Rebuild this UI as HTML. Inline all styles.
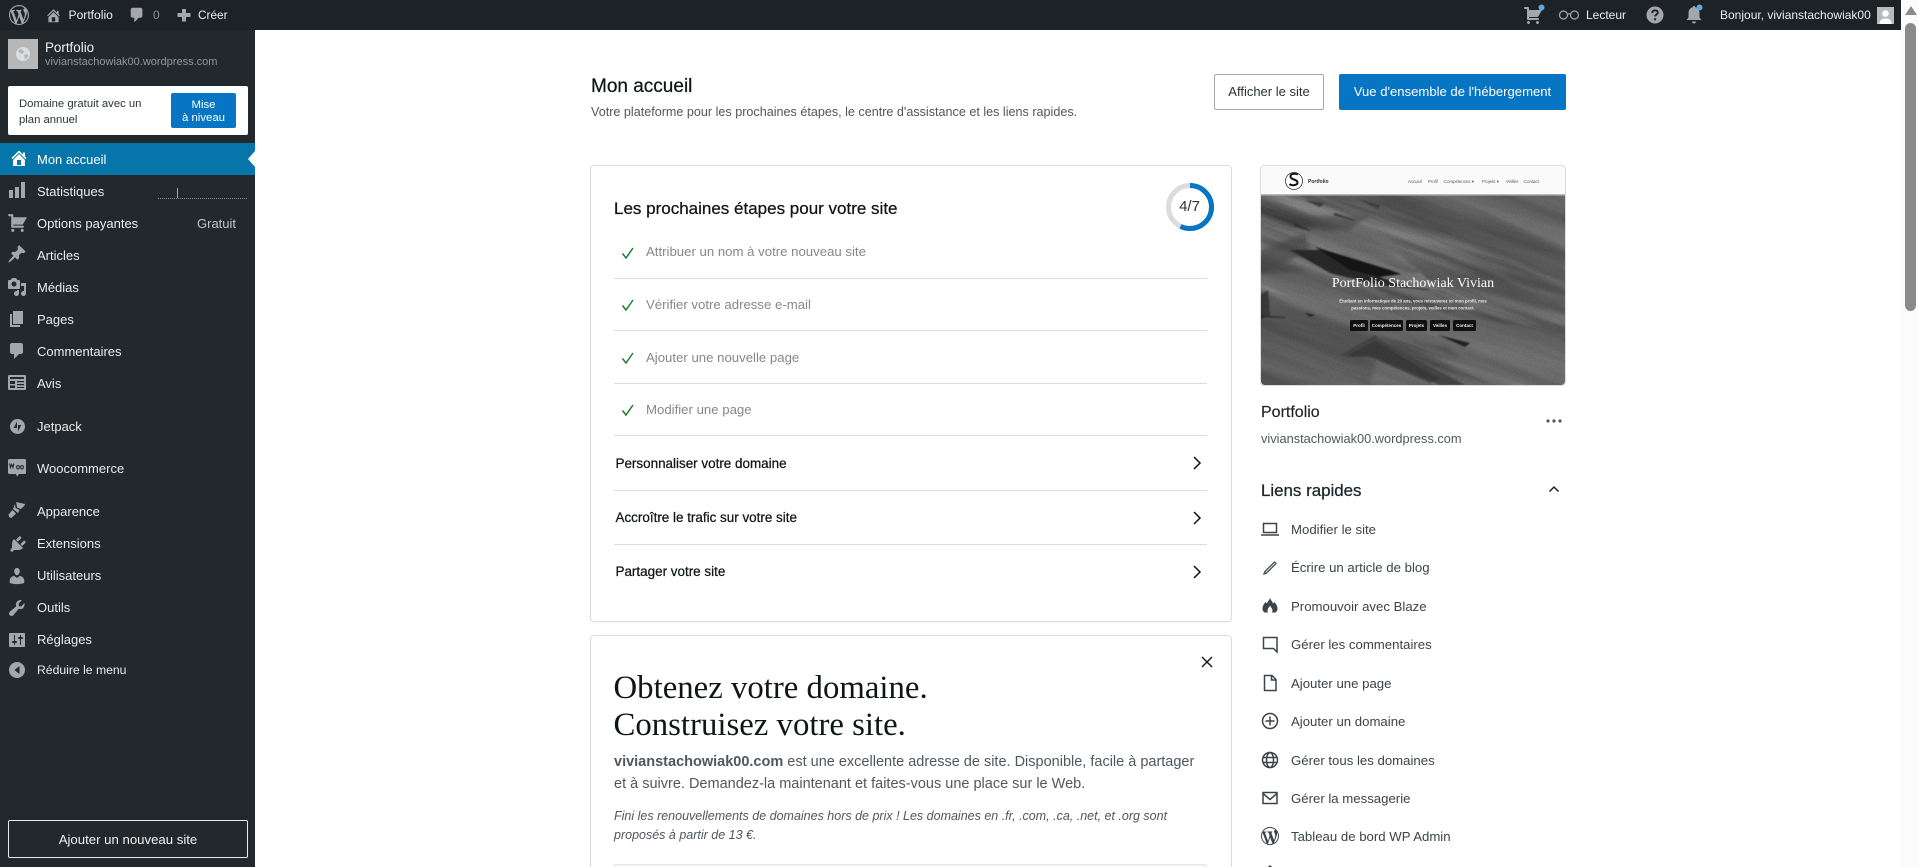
<!DOCTYPE html>
<html lang="fr">
<head>
<meta charset="utf-8">
<title>Mon accueil</title>
<style>
html,body{margin:0;padding:0;width:1918px;height:867px;overflow:hidden;background:#fff}
body{font-family:"Liberation Sans",Arial,sans-serif;position:relative;color:#2c3338}
.t{position:absolute;white-space:nowrap;line-height:20px;height:20px}
.i{position:absolute;display:block}
#bar{position:absolute;left:0;top:0;width:1901px;height:30px;background:#1d2227}
#side{position:absolute;left:0;top:30px;width:255px;height:837px;background:#23282c}
#track{position:absolute;left:1901px;top:0;width:17px;height:867px;background:#fbfbfb}
#thumb{position:absolute;left:1905px;top:23px;width:11px;height:288px;border-radius:6px;background:#8a8a8a}
.bt{color:#eceded;font-size:12.5px}
.m{color:#eaebec;font-size:13px}
.s{fill:#a4a7aa}
.sel{position:absolute;left:0;top:143px;width:255px;height:32px;background:#0675a9}
.card{position:absolute;left:590px;width:640px;background:#fff;border:1px solid #dcdcde;border-radius:4px;box-shadow:0 1px 2px rgba(0,0,0,.04)}
.hr{position:absolute;left:614px;width:593px;height:1px;background:#dcdcde}
.done{color:#84888d;font-size:13.2px}
.row{color:#101517;font-size:13.45px;-webkit-text-stroke:.25px #101517}
.q{color:#3c434a;font-size:13.2px}
.qi{position:absolute;left:1260px;width:20px;height:20px;fill:none;stroke:#3c434a;stroke-width:1.5}
.chk{position:absolute;left:621px;width:14px;height:14px;fill:none;stroke:#1c7d34;stroke-width:1.5}
.chev{position:absolute;left:1191px;width:12px;height:14px;fill:none;stroke:#101517;stroke-width:1.5}
</style>
</head>
<body>
<div id="bar"></div>
<div id="track"></div>
<svg class="i" style="left:1905px;top:6px" width="12" height="9" viewBox="0 0 12 9"><path d="M6 0l6 9H0z" fill="#8a8a8a"/></svg>
<div id="thumb"></div>

<!-- Top bar left -->
<svg class="i" style="left:9px;top:5px" width="20" height="20" viewBox="0 0 20 20"><path fill="#a4a7aa" d="M20 10c0-5.510-4.490-10-10-10C4.480 0 0 4.490 0 10c0 5.520 4.480 10 10 10 5.510 0 10-4.480 10-10zM7.780 15.370L4.370 6.220c.55-.02 1.170-.08 1.170-.08.5-.06.44-1.130-.06-1.110 0 0-1.450.11-2.370.11-.18 0-.37 0-.58-.01C4.120 2.690 6.870 1.110 10 1.110c2.330 0 4.450.87 6.050 2.340-.68-.11-1.650.39-1.650 1.580 0 .74.45 1.360.9 2.100.35.61.55 1.360.55 2.460 0 1.490-1.400 5-1.400 5l-3.030-8.370c.54-.02.82-.17.82-.17.5-.05.44-1.250-.06-1.220 0 0-1.440.12-2.380.12-.87 0-2.330-.12-2.330-.12-.5-.03-.56 1.200-.06 1.220l.92.08 1.260 3.410zM17.410 10c.24-.64.74-1.870.43-4.250.7 1.290 1.050 2.710 1.050 4.250 0 3.290-1.730 6.240-4.480 7.670.99-2.650 1.990-5.020 3-7.670zM6.100 18.090C3.120 16.650 1.110 13.530 1.110 10c0-1.300.23-2.480.72-3.590C3.250 10.300 4.670 14.200 6.100 18.090zm4.030-6.630l2.580 6.980c-.85.290-1.790.45-2.710.45-.790 0-1.550-.11-2.260-.32.79-2.240 1.600-4.470 2.390-7.110z"/></svg>
<svg class="i" style="left:45px;top:7px" width="17" height="17" viewBox="0 0 20 20"><path fill="#a4a7aa" d="M16 8.500l1.530 1.530-1.060 1.060L10 4.620l-6.470 6.470-1.060-1.060L10 2.500l4 4v-2h2v4zm-6-2.460l6 5.990V18H4v-5.970zM12 17v-5H8v5h4z"/></svg>
<div class="t bt" style="left:68.500px;top:5px;font-size:12.100px">Portfolio</div>
<svg class="i" style="left:128px;top:6px" width="18" height="18" viewBox="0 0 20 20"><path fill="#a4a7aa" d="M5 2h9c1.100 0 2 .9 2 2v7c0 1.100-.9 2-2 2h-2l-5 5v-5H5c-1.100 0-2-.9-2-2V4c0-1.100.9-2 2-2z"/></svg>
<div class="t" style="left:153px;top:5px;font-size:12px;color:#8b8f94">0</div>
<svg class="i" style="left:177px;top:8px" width="14" height="14" viewBox="0 0 14 14"><path fill="#a4a7aa" d="M5 1h4v4h4.500v4H9v4.500H5V9H.5V5H5z"/></svg>
<div class="t bt" style="left:198px;top:5px;font-size:11.800px">Créer</div>

<!-- Top bar right -->
<svg class="i" style="left:1523px;top:5px" width="20" height="20" viewBox="0 0 20 20"><path fill="#a4a7aa" d="M6 13h9c.55 0 1 .45 1 1s-.45 1-1 1H5c-.55 0-1-.45-1-1V4H2c-.55 0-1-.45-1-1s.45-1 1-1h3c.55 0 1 .45 1 1v2h13l-4 7H6v1zm-.5 3c.83 0 1.500.67 1.500 1.500S6.330 19 5.500 19 4 18.330 4 17.500 4.670 16 5.500 16zm9 0c.83 0 1.500.67 1.500 1.500s-.67 1.500-1.500 1.500-1.500-.67-1.500-1.500.67-1.500 1.500-1.500z"/></svg>
<svg class="i" style="left:1538px;top:4px" width="7" height="7"><circle cx="3.500" cy="3.500" r="3" fill="#5aa9e6"/></svg>
<svg class="i" style="left:1558px;top:10px" width="22" height="10" viewBox="0 0 22 10"><g fill="none" stroke="#a4a7aa" stroke-width="1.200"><circle cx="5.500" cy="5" r="4"/><circle cx="16.500" cy="5" r="4"/><path d="M9.500 4.500q2-1.500 3 0"/></g></svg>
<div class="t bt" style="left:1586px;top:5px;font-size:12px">Lecteur</div>
<svg class="i" style="left:1646px;top:6px" width="18" height="18" viewBox="0 0 18 18"><circle cx="9" cy="9" r="8.500" fill="#a4a7aa"/><path d="M6.200 7q.2-2.700 2.900-2.700 2.700 0 2.700 2.300c0 1.900-2.700 1.900-2.700 3.800" fill="none" stroke="#1d2227" stroke-width="1.900"/><circle cx="9.100" cy="13.300" r="1.200" fill="#1d2227"/></svg>
<svg class="i" style="left:1685px;top:5px" width="18" height="20" viewBox="0 0 18 20"><path fill="#a4a7aa" d="M9 1c.8 0 1.300.5 1.300 1.200C13 2.900 14.500 5 14.500 8v4.500l2 2.500H1.500l2-2.500V8c0-3 1.500-5.100 4.200-5.800C7.700 1.500 8.200 1 9 1zM7 16.500h4c0 1.200-.9 2-2 2s-2-.8-2-2z"/></svg>
<svg class="i" style="left:1696px;top:4px" width="7" height="7"><circle cx="3.500" cy="3.500" r="3" fill="#5aa9e6"/></svg>
<div class="t bt" style="left:1720px;top:5px;font-size:12px">Bonjour, vivianstachowiak00</div>
<svg class="i" style="left:1877px;top:7px" width="17" height="17" viewBox="0 0 17 17"><rect width="17" height="17" fill="#b9babb"/><circle cx="8.500" cy="6.500" r="3.300" fill="#fff"/><path d="M2.500 17c0-4 2.500-5.500 6-5.500s6 1.500 6 5.500z" fill="#fff"/></svg>

<!-- Sidebar -->
<div id="side"></div>
<svg class="i" style="left:8px;top:39px" width="30" height="30" viewBox="0 0 30 30"><rect width="30" height="30" fill="#b5b7b9"/><circle cx="15" cy="15" r="7" fill="#dcdddf"/><path d="M12 10l3 1 1 2-2 2-2-1-2-2zM16 16l3-1 1.500 2-3 3.500z" fill="#b5b7b9"/></svg>
<div class="t" style="left:45px;top:37.500px;font-size:13.400px;color:#f0f0f1">Portfolio</div>
<div class="t" style="left:45px;top:52px;font-size:11px;color:#93979b">vivianstachowiak00.wordpress.com</div>

<div style="position:absolute;left:8px;top:86px;width:240px;height:49px;background:#fff;border-radius:2px"></div>
<div class="t" style="left:19px;top:93.500px;font-size:11.300px;color:#2c3338">Domaine gratuit avec un</div>
<div class="t" style="left:19px;top:109.500px;font-size:11.300px;color:#2c3338">plan annuel</div>
<div style="position:absolute;left:171px;top:93px;width:65px;height:35px;background:#0675c4;border-radius:2px"></div>
<div class="t" style="left:171px;top:95px;width:65px;text-align:center;font-size:11.400px;color:#fff">Mise</div>
<div class="t" style="left:171px;top:107.500px;width:65px;text-align:center;font-size:11.400px;color:#fff">à niveau</div>

<div class="sel"></div>
<svg class="i" style="left:248px;top:151px" width="7" height="16" viewBox="0 0 7 16"><path d="M7 0v16L0 8z" fill="#fff"/></svg>
<svg class="i" style="left:9px;top:148px" width="20" height="20" viewBox="0 0 20 20"><path fill="#fff" d="M16 8.500l1.530 1.530-1.060 1.060L10 4.620l-6.470 6.470-1.060-1.060L10 2.500l4 4v-2h2v4zm-6-2.460l6 5.990V18H4v-5.970zM12 17v-5H8v5h4z"/></svg>
<div class="t m" style="left:37px;top:150px;color:#fff">Mon accueil</div>

<svg class="i s" style="left:7px;top:180px" width="20" height="20" viewBox="0 0 20 20"><path d="M18 18V2h-4v16h4zm-6 0V7H8v11h4zm-6 0v-8H2v8h4z"/></svg>
<div class="t m" style="left:37px;top:182px">Statistiques</div>
<div style="position:absolute;left:158px;top:198px;width:89px;border-top:1px dotted #8c8f94"></div>
<div style="position:absolute;left:177px;top:188px;width:1px;height:10px;background:#a4a7aa"></div>

<svg class="i s" style="left:7px;top:212px" width="21" height="21" viewBox="0 0 20 20"><path d="M6 13h9c.55 0 1 .45 1 1s-.45 1-1 1H5c-.55 0-1-.45-1-1V4H2c-.55 0-1-.45-1-1s.45-1 1-1h3c.55 0 1 .45 1 1v2h13l-4 7H6v1zm-.5 3c.83 0 1.500.67 1.500 1.500S6.330 19 5.500 19 4 18.330 4 17.500 4.670 16 5.500 16zm9 0c.83 0 1.500.67 1.500 1.500s-.67 1.500-1.500 1.500-1.500-.67-1.500-1.500.67-1.500 1.500-1.500z"/></svg>
<div class="t m" style="left:37px;top:214px">Options payantes</div>
<div class="t m" style="left:197px;top:214px;color:#c3c4c7">Gratuit</div>

<svg class="i s" style="left:7px;top:244px" width="20" height="20" viewBox="0 0 20 20"><path d="M10.440 3.020l1.820-1.820 6.360 6.350-1.830 1.820c-1.050-.68-2.480-.57-3.410.36l-.75.75c-.92.93-1.040 2.350-.35 3.410l-1.830 1.820-2.410-2.410-2.800 2.790c-.42.42-3.380 2.710-3.800 2.290s1.860-3.390 2.280-3.810l2.790-2.790L4.100 9.360l1.830-1.820c1.050.69 2.480.57 3.400-.36l.75-.75c.93-.92 1.050-2.350.36-3.410z"/></svg>
<div class="t m" style="left:37px;top:245.500px">Articles</div>

<svg class="i s" style="left:7px;top:277px" width="20" height="20" viewBox="0 0 20 20"><path d="M13 11V4c0-.55-.45-1-1-1h-1.670L9 1H5L3.670 3H2c-.55 0-1 .45-1 1v7c0 .55.45 1 1 1h10c.55 0 1-.45 1-1zM7 4.500c1.380 0 2.500 1.120 2.500 2.500S8.380 9.500 7 9.500 4.500 8.380 4.500 7 5.620 4.500 7 4.500zM14 6h5v10.500c0 1.380-1.120 2.500-2.500 2.500S14 17.880 14 16.500s1.120-2.500 2.500-2.500c.17 0 .34.02.5.05V9h-3V6zm-4 8.050V13h2v3.500c0 1.380-1.120 2.500-2.500 2.500S7 17.880 7 16.500 8.120 14 9.500 14c.17 0 .34.02.5.05z"/></svg>
<div class="t m" style="left:37px;top:277.500px">Médias</div>

<svg class="i s" style="left:7px;top:309px" width="20" height="20" viewBox="0 0 20 20"><path d="M6 15V2h10v13H6zm-1 1h8v2H3V5h2v11z"/></svg>
<div class="t m" style="left:37px;top:309.500px">Pages</div>

<svg class="i s" style="left:7px;top:341px" width="20" height="20" viewBox="0 0 20 20"><path d="M5 2h9c1.100 0 2 .9 2 2v7c0 1.100-.9 2-2 2h-2l-5 5v-5H5c-1.100 0-2-.9-2-2V4c0-1.100.9-2 2-2z"/></svg>
<div class="t m" style="left:37px;top:341.500px">Commentaires</div>

<svg class="i" style="left:8px;top:375px" width="18" height="15" viewBox="0 0 18 15"><rect width="18" height="15" rx="1" fill="#a4a7aa"/><path d="M2 2h14v2H2zM9 6h7v1.200H9zM9 9h7v1.200H9zM9 12h7v1H9z" fill="#23282c"/><path d="M2 6h5v3H2zM2 10.500h5V13H2z" fill="#23282c"/></svg>
<div class="t m" style="left:37px;top:373.500px">Avis</div>

<svg class="i" style="left:10px;top:419px" width="15" height="15" viewBox="0 0 15 15"><circle cx="7.500" cy="7.500" r="7.500" fill="#a4a7aa"/><path d="M7 2.500v6.500H3.700zM8 12.500V6h3.300z" fill="#23282c"/></svg>
<div class="t m" style="left:37px;top:417px">Jetpack</div>

<svg class="i" style="left:8px;top:459px" width="18" height="18" viewBox="0 0 18 18"><path d="M1.500 0h15A1.500 1.500 0 0 1 18 1.500v12a1.500 1.500 0 0 1-1.500 1.500H11l-2 2.500L8 15H1.500A1.500 1.500 0 0 1 0 13.500v-12A1.500 1.500 0 0 1 1.500 0z" fill="#a4a7aa"/><path d="M2.500 5.500l1 4 1.200-3 1.200 3 1-4M11 7.500a1.400 1.800 0 1 0 .01 0zM15 7.500a1.400 1.800 0 1 0 .01 0z" transform="translate(-1 -1)" fill="none" stroke="#23282c" stroke-width="1.100"/></svg>
<div class="t m" style="left:37px;top:459px">Woocommerce</div>

<svg class="i" style="left:8px;top:501px" width="18" height="18" viewBox="0 0 18 18"><path fill="#a4a7aa" d="M8 1l9 2-.5 1.500-3.500 3.500L9 6.500 8.500 3zM7 3l.5 4L11.500 9 10 12 5 8zM4.500 9l3.500 3.500L3.500 17 1 16 .5 13.500z"/></svg>
<div class="t m" style="left:37px;top:502px">Apparence</div>

<svg class="i s" style="left:8px;top:534px" width="20" height="20" viewBox="0 0 20 20"><path d="M13.110 4.360L9.870 7.600 8 5.730l3.240-3.240c.35-.34 1.050-.2 1.560.32.52.51.66 1.210.31 1.550zm-8 1.770l.91-1.120 9.010 9.010-1.190.84c-.71.71-2.630 1.160-3.820 1.160H6.140L4.900 17.260c-.59.59-1.540.59-2.120 0-.59-.58-.59-1.530 0-2.120l1.240-1.240v-3.880c0-1.130.4-3.050 1.090-3.890zm7.260 3.970l3.240-3.240c.34-.35 1.040-.21 1.550.31.52.51.66 1.210.31 1.550l-3.240 3.250z"/></svg>
<div class="t m" style="left:37px;top:534px">Extensions</div>

<svg class="i s" style="left:7px;top:566px" width="20" height="20" viewBox="0 0 20 20"><path d="M10 9.250c-2.270 0-2.730-3.440-2.730-3.440C7 4.020 7.820 2 9.970 2c2.160 0 2.980 2.020 2.710 3.810 0 0-.41 3.440-2.680 3.440zm0 2.570L12.720 10c2.390 0 4.520 2.330 4.520 4.530v2.490s-3.650 1.130-7.240 1.130c-3.650 0-7.240-1.130-7.240-1.130v-2.490c0-2.250 1.940-4.480 4.470-4.480z"/></svg>
<div class="t m" style="left:37px;top:566px">Utilisateurs</div>

<svg class="i s" style="left:7px;top:598px" width="20" height="20" viewBox="0 0 20 20"><path d="M16.680 9.770c-1.340 1.340-3.300 1.670-4.950.99l-5.410 6.520c-.99.99-2.590.99-3.580 0s-.99-2.590 0-3.570l6.520-5.420c-.68-1.650-.35-3.610.99-4.950 1.280-1.280 3.120-1.640 4.730-1.080L11.530 5.720 11.900 8.100l2.380.37 3.060-3.460c.56 1.610.2 3.450-1.080 4.730z"/></svg>
<div class="t m" style="left:37px;top:598px">Outils</div>

<svg class="i s" style="left:7px;top:630px" width="20" height="20" viewBox="0 0 20 20"><path d="M18 16V4c0-.55-.45-1-1-1H3c-.55 0-1 .45-1 1v12c0 .55.45 1 1 1h14c.55 0 1-.45 1-1zM8 11h1c.55 0 1 .45 1 1s-.45 1-1 1H8v1.500c0 .28-.22.5-.5.5s-.5-.22-.5-.5V13H6c-.55 0-1-.45-1-1s.45-1 1-1h1V5.500c0-.28.22-.5.5-.5s.5.22.5.5V11zm5-2h-1c-.55 0-1-.45-1-1s.45-1 1-1h1V5.500c0-.28.22-.5.5-.5s.5.22.5.5V7h1c.55 0 1 .45 1 1s-.45 1-1 1h-1v5.500c0 .28-.22.5-.5.5s-.5-.22-.5-.5V9z"/></svg>
<div class="t m" style="left:37px;top:630px">Réglages</div>

<svg class="i" style="left:9px;top:662px" width="16" height="16" viewBox="0 0 16 16"><circle cx="8" cy="8" r="8" fill="#a4a7aa"/><path d="M10.500 4v8l-5-4z" fill="#23282c"/></svg>
<div class="t" style="left:37px;top:660px;font-size:12.200px;color:#eaebec">Réduire le menu</div>

<div style="position:absolute;left:8px;top:820px;width:238px;height:36px;border:1px solid #e8e8e8;border-radius:2px"></div>
<div class="t" style="left:8px;top:830px;width:240px;text-align:center;font-size:13.200px;color:#f0f0f1">Ajouter un nouveau site</div>

<!-- Header -->
<div class="t" style="left:591px;top:77px;font-size:19px;color:#101517;-webkit-text-stroke:.25px #101517">Mon accueil</div>
<div class="t" style="left:591px;top:101.500px;font-size:12.600px;color:#50575e">Votre plateforme pour les prochaines étapes, le centre d'assistance et les liens rapides.</div>
<div style="position:absolute;left:1214px;top:74px;width:108px;height:34px;border:1px solid #a7aaad;border-radius:2px;background:#fff"></div>
<div class="t" style="left:1214px;top:82px;width:110px;text-align:center;font-size:13px;color:#2c3338">Afficher le site</div>
<div style="position:absolute;left:1339px;top:74px;width:227px;height:36px;background:#0675c4;border-radius:2px"></div>
<div class="t" style="left:1339px;top:82px;width:227px;text-align:center;font-size:13.100px;color:#fff">Vue d'ensemble de l'hébergement</div>

<!-- Card 1 -->
<div class="card" style="top:165px;height:455px"></div>
<div class="t" style="left:614px;top:199px;font-size:17px;color:#101517;-webkit-text-stroke:.25px #101517">Les prochaines étapes pour votre site</div>
<svg class="i" style="left:1164.500px;top:182px" width="50" height="50" viewBox="0 0 50 50"><circle cx="25" cy="25" r="21.500" fill="none" stroke="#dcdcde" stroke-width="5"/><circle cx="25" cy="25" r="21.500" fill="none" stroke="#0675c4" stroke-width="5" stroke-dasharray="77.200 135.100" transform="rotate(-90 25 25)"/></svg>
<div class="t" style="left:1164.500px;top:197px;width:50px;text-align:center;font-size:15px;color:#2c3338">4/7</div>

<svg class="chk" style="top:246px" viewBox="0 0 14 14"><path d="M1.500 7.500l3.500 4.500L12 2"/></svg>
<div class="t done" style="left:646px;top:242px">Attribuer un nom à votre nouveau site</div>
<div class="hr" style="top:278px"></div>
<svg class="chk" style="top:298px" viewBox="0 0 14 14"><path d="M1.500 7.500l3.500 4.500L12 2"/></svg>
<div class="t done" style="left:646px;top:295px">Vérifier votre adresse e-mail</div>
<div class="hr" style="top:330px"></div>
<svg class="chk" style="top:351px" viewBox="0 0 14 14"><path d="M1.500 7.500l3.500 4.500L12 2"/></svg>
<div class="t done" style="left:646px;top:348px">Ajouter une nouvelle page</div>
<div class="hr" style="top:383px"></div>
<svg class="chk" style="top:403px" viewBox="0 0 14 14"><path d="M1.500 7.500l3.500 4.500L12 2"/></svg>
<div class="t done" style="left:646px;top:400px">Modifier une page</div>
<div class="hr" style="top:435px"></div>
<div class="t row" style="left:615.500px;top:454px">Personnaliser votre domaine</div>
<svg class="chev" style="top:456px" viewBox="0 0 12 14"><path d="M3 1l6 6-6 6"/></svg>
<div class="hr" style="top:490px"></div>
<div class="t row" style="left:615.500px;top:508px">Accroître le trafic sur votre site</div>
<svg class="chev" style="top:511px" viewBox="0 0 12 14"><path d="M3 1l6 6-6 6"/></svg>
<div class="hr" style="top:544px"></div>
<div class="t row" style="left:615.500px;top:562px">Partager votre site</div>
<svg class="chev" style="top:565px" viewBox="0 0 12 14"><path d="M3 1l6 6-6 6"/></svg>

<!-- Card 2 -->
<div class="card" style="top:635px;height:260px"></div>
<svg class="i" style="left:1201px;top:656px" width="12" height="12" viewBox="0 0 12 12"><path d="M1 1l10 10M11 1L1 11" stroke="#101517" stroke-width="1.400"/></svg>
<div class="t" style="left:613.500px;top:671.500px;font-family:'Liberation Serif',serif;font-size:32.800px;line-height:32px;height:32px;color:#101517">Obtenez votre domaine.</div>
<div class="t" style="left:613.500px;top:709px;font-family:'Liberation Serif',serif;font-size:32.800px;line-height:32px;height:32px;color:#101517">Construisez votre site.</div>
<div class="t" style="left:614px;top:752px;font-size:14.500px;color:#50575e"><b>vivianstachowiak00.com</b> est une excellente adresse de site. Disponible, facile à partager</div>
<div class="t" style="left:614px;top:774px;font-size:14.500px;color:#50575e">et à suivre. Demandez-la maintenant et faites-vous une place sur le Web.</div>
<div class="t" style="left:614px;top:806px;font-size:12.500px;font-style:italic;color:#50575e">Fini les renouvellements de domaines hors de prix ! Les domaines en .fr, .com, .ca, .net, et .org sont</div>
<div class="t" style="left:614px;top:825px;font-size:12.500px;font-style:italic;color:#50575e">proposés à partir de 13 €.</div>
<div style="position:absolute;left:614px;top:864px;width:593px;height:30px;background:#f6f7f7;border:1px solid #e4e5e6;box-sizing:border-box;border-radius:2px"></div>

<!-- Preview -->
<div style="position:absolute;left:1260px;top:165px;width:306px;height:221px;border:1px solid #dcdcde;box-sizing:border-box;border-radius:4px;overflow:hidden;background:#fafafa"></div>
<svg class="i" style="left:1260px;top:165px" width="306" height="221" viewBox="0 0 306 221">
<defs>
<clipPath id="c"><path d="M1 30h304v186a4 4 0 0 1-4 4H5a4 4 0 0 1-4-4z"/></clipPath>
<filter id="b1"><feGaussianBlur stdDeviation="2"/></filter>
<filter id="b2"><feGaussianBlur stdDeviation=".8"/></filter>
<filter id="sand" x="0" y="0" width="100%" height="100%" color-interpolation-filters="sRGB"><feTurbulence type="fractalNoise" baseFrequency=".005 .055" numOctaves="4" seed="11"/><feColorMatrix values=".45 0 0 0 .165  .45 0 0 0 .165  .45 0 0 0 .165  0 0 0 0 1"/></filter>
<filter id="n" x="0" y="0" width="100%" height="100%"><feTurbulence type="fractalNoise" baseFrequency=".9" numOctaves="2" seed="4"/><feColorMatrix values="0 0 0 0 0 0 0 0 0 0 0 0 0 0 0 0 0 0 .9 -.3"/></filter>
</defs>
<g clip-path="url(#c)">
<rect x="-80" y="-120" width="480" height="460" transform="rotate(20 153 125)" filter="url(#sand)"/>
<g filter="url(#b1)" opacity=".65">
<path d="M90 30H306V85L200 50z" fill="#6e6e6e"/>
<path d="M130 30L306 105v-20L190 30z" fill="#5a5a5a"/>
<path d="M150 30L306 95v20L110 30z" fill="#555"/>
<path d="M0 110L50 105 120 135 306 170v30L110 170 30 140z" fill="#6e6e6e"/>
<path d="M0 130L100 165 220 221H0z" fill="#5c5c5c"/>
<path d="M140 90L306 135v15L170 115z" fill="#4f4f4f"/>
<path d="M30 65L110 60 150 90 70 80z" fill="#757575"/>
<path d="M0 85L45 68 50 85 12 105 0 110z" fill="#4a4a4a"/>
<path d="M50 52L110 50 90 65 60 65z" fill="#505050"/>
<path d="M150 145L306 190v31H230z" fill="#6e6e6e"/>
<path d="M120 180L200 221H110z" fill="#747474"/>
<path d="M0 150L60 160 110 195 30 221H0z" fill="#5a5a5a"/>
</g>
<g filter="url(#b2)">
<path d="M30 85L60 85 100 102 160 115 170 125 120 120 70 108z" fill="#2b2b2b"/>
<path d="M55 82L130 105 170 120 145 118 90 105z" fill="#141414"/>
<path d="M80 190L115 170 120 175 205 220H180L110 190z" fill="#464646"/>
<path d="M85 192L115 176 180 214 170 218 110 192z" fill="#333" opacity=".6"/>
<path d="M120 112L160 107 180 125 150 122z" fill="#767676"/>
<path d="M0 130L8 125 10 150 0 155z" fill="#3a3a3a"/>
<path d="M0 150L25 152 25 153 0 152z" fill="#2a2a2a"/>
<path d="M35 58L50 65 50 66 33 60z" fill="#2e2e2e"/>
<path d="M75 48L95 55 95 56 73 50z" fill="#3a3a3a"/>
<path d="M45 35L65 38 60 42z" fill="#3f3f3f"/>
<path d="M100 35L120 40 118 44z" fill="#3f3f3f"/>
<path d="M45 148L55 150 50 152z" fill="#222"/>
<path d="M178 170L210 178 205 182z" fill="#222"/>
</g>
<rect x="0" y="30" width="306" height="191" filter="url(#n)" opacity=".28"/>
</g>
<rect x="1" y="29" width="304" height="1.500" fill="#b9b9b9"/>
<circle cx="34" cy="16" r="8.500" fill="#fff" stroke="#333" stroke-width=".8"/>
<path d="M38 9.500c-1.500-1-7.500-1.500-7.500 2 0 3.500 7 2.500 7 6 0 3-6 3.500-8 1.500" fill="none" stroke="#111" stroke-width="2"/>
<text x="48" y="18" font-family="Liberation Sans" font-size="5" font-weight="700" fill="#333">Portfolio</text>
<text x="148" y="18" font-family="Liberation Sans" font-size="4.300" fill="#555">Accueil</text>
<text x="168" y="18" font-family="Liberation Sans" font-size="4.300" fill="#555">Profil</text>
<text x="184" y="18" font-family="Liberation Sans" font-size="4.300" fill="#555">Compétences ▾</text>
<text x="222" y="18" font-family="Liberation Sans" font-size="4.300" fill="#555">Projets ▾</text>
<text x="246" y="18" font-family="Liberation Sans" font-size="4.300" fill="#555">Veilles</text>
<text x="264" y="18" font-family="Liberation Sans" font-size="4.300" fill="#555">Contact</text>
<text x="153" y="122" text-anchor="middle" font-family="Liberation Serif" font-size="14" fill="#fff">PortFolio Stachowiak Vivian</text>
<text x="153" y="137.500" text-anchor="middle" font-family="Liberation Sans" font-size="4.300" font-weight="700" fill="#e8e8e8">Étudiant en informatique de 20 ans, vous retrouverez ici mon profil, mes</text>
<text x="153" y="144.500" text-anchor="middle" font-family="Liberation Sans" font-size="4.300" font-weight="700" fill="#e8e8e8">passions, mes compétences, projets, veilles et mon contact.</text>
<g font-family="Liberation Sans" font-size="4.500" font-weight="700" fill="#eee" text-anchor="middle">
<rect x="90" y="155" width="18" height="11" rx="1.500" fill="#101010"/><text x="99" y="162">Profil</text>
<rect x="110" y="155" width="33" height="11" rx="1.500" fill="#101010"/><text x="126.500" y="162">Compétences</text>
<rect x="146" y="155" width="21" height="11" rx="1.500" fill="#101010"/><text x="156.500" y="162">Projets</text>
<rect x="170" y="155" width="20" height="11" rx="1.500" fill="#101010"/><text x="180" y="162">Veilles</text>
<rect x="193" y="155" width="23" height="11" rx="1.500" fill="#101010"/><text x="204.500" y="162">Contact</text>
</g>
</svg>

<div class="t" style="left:1261px;top:403px;font-size:16px;color:#1d2327;-webkit-text-stroke:.15px #1d2327">Portfolio</div>
<div class="t" style="left:1261px;top:428.500px;font-size:12.800px;color:#50575e">vivianstachowiak00.wordpress.com</div>
<svg class="i" style="left:1545px;top:418px" width="18" height="6"><circle cx="3" cy="3" r="1.600" fill="#50575e"/><circle cx="9" cy="3" r="1.600" fill="#50575e"/><circle cx="15" cy="3" r="1.600" fill="#50575e"/></svg>

<div class="t" style="left:1261px;top:480.500px;font-size:16.900px;color:#1d2327;-webkit-text-stroke:.25px #1d2327">Liens rapides</div>
<svg class="i" style="left:1548px;top:485px" width="12" height="8" viewBox="0 0 12 8"><path d="M1.500 6.500L6 2l4.500 4.500" fill="none" stroke="#1d2327" stroke-width="1.500"/></svg>

<svg class="qi" style="top:519px" viewBox="0 0 20 20"><path d="M3.500 4.500h13v9h-13zM1 16h18"/></svg>
<div class="t q" style="left:1291px;top:520px">Modifier le site</div>
<svg class="qi" style="top:558px" viewBox="0 0 20 20"><path d="M3 17l1-3.500L14.500 3 17 5.500 6.500 16z" fill="#50575e" stroke="none"/><path d="M5.500 14.500L15 5" stroke="#fff" stroke-width=".7"/></svg>
<div class="t q" style="left:1291px;top:558px">Écrire un article de blog</div>
<svg class="qi" style="top:596px" viewBox="0 0 20 20"><path d="M10 2c.5 2 2.500 3.500 3 5.500L14.500 6c1.500 2 3 4 3 6.500 0 1.500-.5 3-2 4h-11c-1.500-1-2-2.500-2-4C2.500 10 4 8 5.500 6L7 7.500C7.500 5.500 9.500 4 10 2z" fill="#3c434a" stroke="none"/><path d="M10 9.500c.5 1.500 2.500 3 2.500 5 0 1-.5 2-1 2.500h-3c-.5-.5-1-1.500-1-2.500 0-2 2-3.500 2.500-5z" fill="#fff" stroke="none"/></svg>
<div class="t q" style="left:1291px;top:597px">Promouvoir avec Blaze</div>
<svg class="qi" style="top:634px" viewBox="0 0 20 20"><path d="M3.500 3.500h13.500v14.500l-3.500-3.500H3.500z"/></svg>
<div class="t q" style="left:1291px;top:635px">Gérer les commentaires</div>
<svg class="qi" style="top:673px" viewBox="0 0 20 20"><path d="M4.500 2.500h7.500l4 4v11H4.500zM11.500 2.500v4.500h4.500"/></svg>
<div class="t q" style="left:1291px;top:674px">Ajouter une page</div>
<svg class="qi" style="top:711px" viewBox="0 0 20 20"><circle cx="10" cy="10" r="7.500"/><path d="M10 5.500v9M5.500 10h9"/></svg>
<div class="t q" style="left:1291px;top:712px">Ajouter un domaine</div>
<svg class="qi" style="top:750px" viewBox="0 0 20 20"><circle cx="10" cy="10" r="7.500"/><ellipse cx="10" cy="10" rx="3.500" ry="7.500"/><path d="M2.500 7.500h15M2.500 12.500h15"/></svg>
<div class="t q" style="left:1291px;top:751px">Gérer tous les domaines</div>
<svg class="qi" style="top:788px" viewBox="0 0 20 20"><path d="M3 4.500h14v11H3zM3 5.500l7 6 7-6"/></svg>
<div class="t q" style="left:1291px;top:788.500px">Gérer la messagerie</div>
<svg class="i" style="left:1261px;top:827px" width="18" height="18" viewBox="0 0 20 20"><path fill="#3c434a" d="M20 10c0-5.510-4.490-10-10-10C4.480 0 0 4.490 0 10c0 5.520 4.480 10 10 10 5.510 0 10-4.480 10-10zM7.780 15.370L4.370 6.220c.55-.02 1.170-.08 1.170-.08.5-.06.44-1.130-.06-1.110 0 0-1.450.11-2.370.11-.18 0-.37 0-.58-.01C4.120 2.690 6.870 1.110 10 1.110c2.330 0 4.450.87 6.050 2.340-.68-.11-1.650.39-1.650 1.580 0 .74.45 1.360.9 2.100.35.61.55 1.360.55 2.460 0 1.490-1.400 5-1.400 5l-3.030-8.370c.54-.02.82-.17.82-.17.5-.05.44-1.250-.06-1.220 0 0-1.440.12-2.380.12-.87 0-2.330-.12-2.330-.12-.5-.03-.56 1.200-.06 1.220l.92.08 1.260 3.410zM17.410 10c.24-.64.74-1.870.43-4.250.7 1.290 1.050 2.710 1.050 4.250 0 3.290-1.730 6.240-4.480 7.670.99-2.650 1.990-5.020 3-7.670zM6.100 18.090C3.120 16.650 1.110 13.530 1.110 10c0-1.300.23-2.480.72-3.590C3.250 10.300 4.670 14.200 6.100 18.090zm4.030-6.630l2.580 6.980c-.85.290-1.790.45-2.710.45-.790 0-1.550-.11-2.260-.32.79-2.240 1.600-4.470 2.390-7.110z"/></svg>
<div class="t q" style="left:1291px;top:827px">Tableau de bord WP Admin</div>
<svg class="qi" style="top:863px" viewBox="0 0 20 20"><path d="M10 2l3 3H7z" fill="#3c434a" stroke="none"/></svg>
</body>
</html>
